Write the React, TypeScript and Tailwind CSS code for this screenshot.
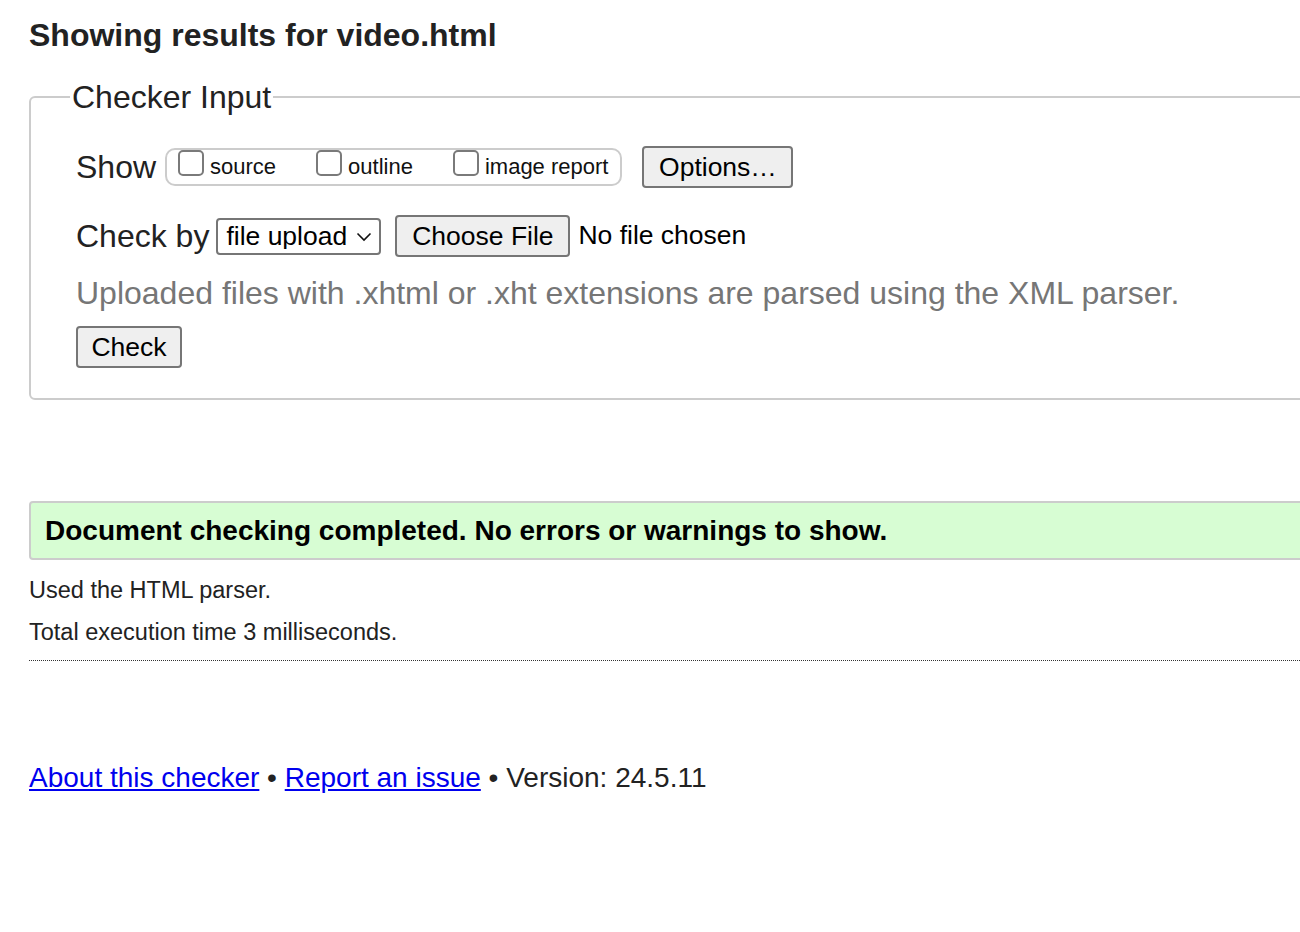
import React from "react";

const ChevronDown = () => (
  <svg
    width="16"
    height="10"
    viewBox="0 0 16 10"
    fill="none"
    className="pointer-events-none absolute right-[9px] top-[14px]"
  >
    <path d="M1.5 1.5 L8 8 L14.5 1.5" stroke="#111" strokeWidth="1.6" />
  </svg>
);

const Checkbox = ({ label }: { label: string }) => (
  <label className="flex items-center gap-[6px]">
    <input
      type="checkbox"
      className="-mt-[9px] h-[26px] w-[26px] appearance-none rounded-[5px] border-2 border-[#7a7a7a] bg-white"
    />
    <span className="text-[22px] leading-[26px] text-[#111]">{label}</span>
  </label>
);

const FormButton = ({ children, className }: { children: React.ReactNode; className?: string }) => (
  <button
    type="button"
    className={
      "h-[42px] rounded-[4px] border-2 border-[#767676] bg-[#efefef] text-[26.5px] leading-none text-black " +
      (className || "")
    }
  >
    {children}
  </button>
);

export default function App() {
  return (
    <div className="w-[1300px] overflow-hidden bg-white font-['Liberation_Sans',Arial,sans-serif]">
      <div className="w-[1400px] pb-[140px] pl-[29px]">
        <h1 className="mt-[16px] text-[32px] font-bold leading-[38px] text-[#222]">
          Showing results for video.html
        </h1>

        <fieldset className="mt-[24px] rounded-[6px] border-2 border-[#cccccc] pb-[30px] pl-[45px] pt-[30px]">
          <legend className="-ml-[6px] px-[2px] text-[32px] leading-[38px] text-[#222]">
            Checker Input
          </legend>

          <div className="flex items-center">
            <span className="text-[32px] leading-[38px] text-[#222]">Show</span>
            <div className="ml-[9px] flex h-[38px] items-center gap-[40px] rounded-[10px] border-2 border-[#cccccc] pl-[11px] pr-[12px]">
              <Checkbox label="source" />
              <Checkbox label="outline" />
              <Checkbox label="image report" />
            </div>
            <FormButton className="ml-[20px] w-[151px]">Options…</FormButton>
          </div>

          <div className="mt-[27px] flex items-center">
            <span className="text-[32px] leading-[38px] text-[#222]">Check by</span>
            <div className="relative ml-[7px]">
              <select className="h-[37px] w-[165px] appearance-none rounded-[4px] border-2 border-[#767676] bg-white pl-[8px] text-[26.5px] leading-none text-black">
                <option>file upload</option>
              </select>
              <ChevronDown />
            </div>
            <FormButton className="ml-[14px] w-[175px]">Choose File</FormButton>
            <span className="ml-[8px] text-[26.5px] text-black">No file chosen</span>
          </div>

          <p className="mt-[18px] text-[32px] leading-[37px] text-[#767676]">
            Uploaded files with .xhtml or .xht extensions are parsed using the XML parser.
          </p>

          <FormButton className="mt-[14px] w-[106px]">Check</FormButton>
        </fieldset>

        <div className="mt-[101px] flex h-[59px] items-center rounded-[4px] border-2 border-[#cccccc] bg-[#d7fdd3] pl-[14px]">
          <span className="text-[28px] font-bold text-black">
            Document checking completed. No errors or warnings to show.
          </span>
        </div>

        <p className="mt-[16px] text-[23.5px] leading-[28px] text-[#222]">Used the HTML parser.</p>
        <p className="mt-[14px] text-[23.5px] leading-[28px] text-[#222]">
          Total execution time 3 milliseconds.
        </p>
        <div className="mt-[14px] border-t border-dotted border-[#333]" />

        <div className="mt-[101px] text-[28px] leading-[32px] text-[#222]">
          <a href="#" className="text-[#0000ee] underline">
            About this checker
          </a>
          {" • "}
          <a href="#" className="text-[#0000ee] underline">
            Report an issue
          </a>
          {" • Version: 24.5.11"}
        </div>
      </div>
    </div>
  );
}
